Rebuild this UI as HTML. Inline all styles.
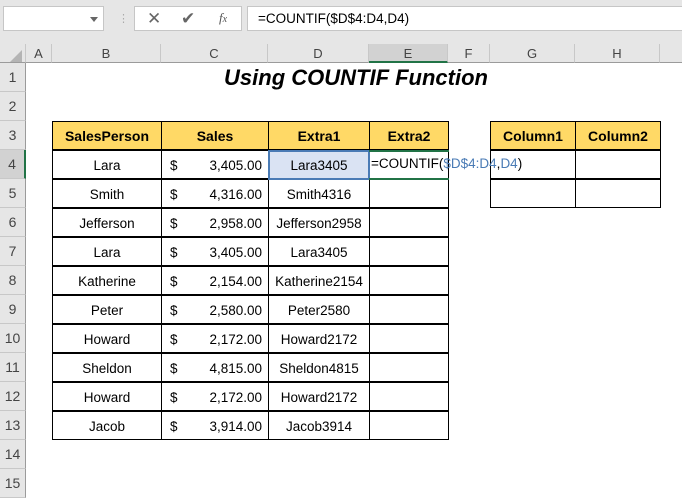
<!DOCTYPE html>
<html><head><style>
*{margin:0;padding:0;box-sizing:border-box}
body{width:682px;height:477px;overflow:hidden;background:#fff;font-family:"Liberation Sans",sans-serif;position:relative}
.a{position:absolute}
.top{left:0;top:0;width:682px;height:44px;background:#e6e6e6}
.box{background:#fff;border:1px solid #c6c6c6}
.ch{top:44px;height:19px;background:#e6e6e6;border-right:1px solid #c8c8c8;border-bottom:1px solid #9b9b9b;font-size:13px;color:#444;text-align:center;line-height:19px}
.rh{left:0;width:26px;height:29px;background:#e6e6e6;border-bottom:1px solid #c8c8c8;border-right:1px solid #9b9b9b;font-size:14px;color:#444;text-align:center;line-height:29px}
.c{height:29px;border:1px solid #000;margin:-1px 0 0 -1px;font-size:13.5px;line-height:29px;text-align:center;color:#000}
.h{background:#ffd966;font-weight:bold;font-size:14px}
</style></head><body>
<div class="a top"></div>
<div class="a box" style="left:3px;top:6px;width:101px;height:25px"></div>
<div class="a" style="left:90px;top:17px;border:4px solid transparent;border-top:5px solid #666"></div>
<div class="a" style="left:118px;top:12px;color:#aaa;font-size:11px">⋮</div>
<div class="a box" style="left:134px;top:6px;width:108px;height:25px"></div>
<div class="a" style="left:147px;top:9px;font-size:17px;color:#666">✕</div>
<div class="a" style="left:181px;top:9px;font-size:17px;color:#666">✔</div>
<div class="a" style="left:219px;top:10px;font-size:13px;color:#555;font-style:italic;font-family:'Liberation Serif',serif">f<span style="font-size:10px">x</span></div>
<div class="a box" style="left:247px;top:6px;width:440px;height:25px;font-size:13.5px;line-height:23px;padding-left:10px">=COUNTIF($D$4:D4,D4)</div>
<div class="a ch" style="left:0;width:26px"><div class="a" style="left:10px;top:6px;border-left:12px solid transparent;border-bottom:12px solid #b4b4b4"></div></div>
<div class="a ch" style="left:26px;width:26px">A</div>
<div class="a ch" style="left:52px;width:109px">B</div>
<div class="a ch" style="left:161px;width:107px">C</div>
<div class="a ch" style="left:268px;width:101px">D</div>
<div class="a ch" style="left:369px;width:79px;background:#d2d2d2;border-bottom:2px solid #217346">E</div>
<div class="a ch" style="left:448px;width:42px">F</div>
<div class="a ch" style="left:490px;width:85px">G</div>
<div class="a ch" style="left:575px;width:85px">H</div>
<div class="a ch" style="left:660px;width:30px"></div>
<div class="a rh" style="top:63px">1</div><div class="a rh" style="top:92px">2</div><div class="a rh" style="top:121px">3</div>
<div class="a rh" style="top:150px;background:#d2d2d2;border-right:2px solid #217346">4</div>
<div class="a rh" style="top:179px">5</div><div class="a rh" style="top:208px">6</div><div class="a rh" style="top:237px">7</div><div class="a rh" style="top:266px">8</div><div class="a rh" style="top:295px">9</div><div class="a rh" style="top:324px">10</div><div class="a rh" style="top:353px">11</div><div class="a rh" style="top:382px">12</div><div class="a rh" style="top:411px">13</div><div class="a rh" style="top:440px">14</div><div class="a rh" style="top:469px">15</div>
<div class="a" style="left:52px;top:63px;width:608px;height:29px;text-align:center;font-weight:bold;font-style:italic;font-size:22px;line-height:29px">Using COUNTIF Function</div>
<div id="t"></div>
<script>
var rows=[["Lara","3,405.00","Lara3405"],["Smith","4,316.00","Smith4316"],["Jefferson","2,958.00","Jefferson2958"],["Lara","3,405.00","Lara3405"],["Katherine","2,154.00","Katherine2154"],["Peter","2,580.00","Peter2580"],["Howard","2,172.00","Howard2172"],["Sheldon","4,815.00","Sheldon4815"],["Howard","2,172.00","Howard2172"],["Jacob","3,914.00","Jacob3914"]];
var h='';
function cell(x,y,w,txt,cls,st){h+='<div class="a c '+(cls||'')+'" style="left:'+x+'px;top:'+y+'px;width:'+(w+1)+'px;'+(st||'')+'">'+txt+'</div>';}
cell(53,122,109,'SalesPerson','h');cell(162,122,107,'Sales','h');cell(269,122,101,'Extra1','h');cell(370,122,79,'Extra2','h');
cell(491,122,85,'Column1','h');cell(576,122,85,'Column2','h');
for(var i=0;i<10;i++){var y=151+i*29;var r=rows[i];
cell(53,y,109,r[0]);
cell(162,y,107,'<span style="float:left;padding-left:8px">$</span><span style="float:right;padding-right:6px">'+r[1]+'</span>');
cell(269,y,101,r[2],'',i==0?'background:#dae3f3':'');
cell(370,y,79,'');
if(i<2){cell(491,y,85,'');cell(576,y,85,'');}}
document.getElementById('t').innerHTML=h;
</script>
<div class="a" style="left:268px;top:150px;width:102px;height:30px;border:2px solid #4a7bb5"></div>
<div class="a" style="left:369px;top:150px;width:80px;height:30px;border:2px solid #217346;border-left:none;border-right:none"></div>
<div class="a" style="left:371px;top:152px;font-size:13.5px;line-height:24px;white-space:nowrap">=COUNTIF(<span style="color:#4a7bb5">$D$4:D4</span>,<span style="color:#4a7bb5">D4</span>)</div>
</body></html>
